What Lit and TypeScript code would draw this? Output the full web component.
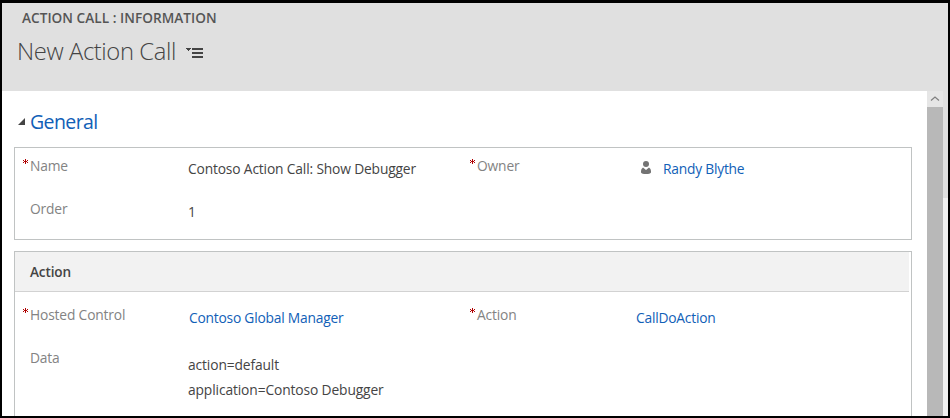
import { LitElement, html, css } from "lit";
import { customElement, property } from "lit/decorators.js";

@customElement("form-field")
class FormField extends LitElement {
  @property() label = "";
  @property({ type: Boolean }) required = false;

  static styles = css`
    :host { display: grid; grid-template-columns: 7px 158px 1fr; align-items: start; white-space: nowrap; }
    .mark { width: 5px; height: 5px; margin-top: 3px; color: #b00000; display: block; }
    .label { color: #838383; line-height: 20px; }
    .value { padding-top: 3px; line-height: 20px; }
  `;

  render() {
    return html`
      <span>${this.required
        ? html`<svg class="mark" viewBox="0 0 5 5" shape-rendering="crispEdges">
            <path fill="currentColor" d="M2 0h1v5h-1zM0 1h1v1h-1zM4 1h1v1h-1zM1 2h3v1h-3zM0 3h1v1h-1zM4 3h1v1h-1z" />
          </svg>`
        : ""}</span>
      <span class="label">${this.label}</span>
      <div class="value"><slot></slot></div>
    `;
  }
}

@customElement("app-root")
class AppRoot extends LitElement {
  static styles = css`
    :host {
      display: flex; flex-direction: column; box-sizing: border-box;
      width: 950px; height: 418px; overflow: hidden;
      border: solid #000; border-width: 3px 2px 2px 2px;
      background: #fff; color: #444;
      font: 13.8px "Open Sans", "Noto Sans", sans-serif; letter-spacing: -0.16px;
      white-space: nowrap;
    }
    .head { flex: none; height: 88px; background: #e0e0e0; box-sizing: border-box; padding: 5px 0 0 15px; }
    .crumb { margin: 0 0 0 5px; font-size: 13.6px; font-weight: 600; line-height: 20px; color: #555; letter-spacing: 0.04px; }
    .title { display: flex; align-items: center; height: 32px; margin-top: 7px; }
    .title h1 { margin: 0; width: 169px; font-size: 23.8px; font-weight: 300; line-height: 32px; color: #444; letter-spacing: -0.4px; }
    .menu { width: 18px; height: 12px; margin-top: 4px; }
    .body { flex: 1; min-height: 0; display: flex; }
    .form { flex: 1; min-width: 0; padding: 17px 15px 0 12px; overflow: hidden; }
    .section { display: flex; align-items: center; height: 28px; margin: 0 0 11px 4px; gap: 5px; }
    .section svg { margin-top: -2px; }
    .section h2 { margin: 0; font-size: 19.5px; font-weight: 400; line-height: 28px; color: #1160b7; letter-spacing: -0.6px; }
    .panel { border: 1px solid #c0c3c3; box-sizing: border-box; }
    .general { height: 93px; padding: 8px 0 0 8px; }
    .action { height: 200px; margin-top: 11px; }
    .bar { height: 39px; margin-right: 2px; padding-left: 15px; background: #f2f2f2; border-bottom: 1px solid #d2d2d2; line-height: 40px; font-weight: 600; font-size: 13.6px; color: #444; }
    .rows { padding: 13px 0 0 8px; }
    .grid { display: grid; grid-template-columns: 447px 1fr; grid-auto-rows: 43px; }
    .link { color: #1160b7; letter-spacing: -0.22px; }
    .inset { padding-left: 1px; }
    .person { display: flex; align-items: center; gap: 11px; padding-left: 5px; }
    .person svg { width: 12px; height: 13px; margin-top: -4px; }
    .lines { line-height: 25px; padding-top: 1px; letter-spacing: -0.12px; }
    .scroll { width: 16px; background: #b8b8b8; }
    .up { height: 16px; background: #e6e6e6; display: block; }
    .outer { width: 5px; background: #f1f1f1; }
    .outer div { height: 107px; background: #e0e0e0; }
  `;

  render() {
    return html`
      <header class="head">
        <p class="crumb">ACTION CALL : INFORMATION</p>
        <div class="title">
          <h1>New Action Call</h1>
          <svg class="menu" viewBox="0 0 18 12" shape-rendering="crispEdges" fill="#444">
            <path d="M0 1h5v1h-1v1h-1v1h-1v-1h-1v-1h-1zM6 1h11v2h-11zM6 5h11v2h-11zM6 9h11v2h-11z" />
          </svg>
        </div>
      </header>
      <div class="body">
        <main class="form">
          <div class="section">
            <svg width="7" height="7" viewBox="0 0 7 7"><path fill="#444" d="M7 0V7H0z" /></svg>
            <h2>General</h2>
          </div>
          <section class="panel general">
            <div class="grid">
              <form-field label="Name" required>Contoso Action Call: Show Debugger</form-field>
              <form-field label="Owner" required>
                <div class="person">
                  <svg viewBox="0 0 12 13" fill="#737373">
                    <circle cx="6" cy="3" r="3" />
                    <path d="M3 6.5L6 9L9 6.5Q11 7.5 11 10V11.5Q10 13 6 13T1 11.5V10Q1 7.5 3 6.5z" />
                  </svg>
                  <span class="link">Randy Blythe</span>
                </div>
              </form-field>
              <form-field label="Order">1</form-field>
            </div>
          </section>
          <section class="panel action">
            <div class="bar">Action</div>
            <div class="rows grid">
              <form-field label="Hosted Control" required><span class="link inset">Contoso Global Manager</span></form-field>
              <form-field label="Action" required><span class="link inset">CallDoAction</span></form-field>
              <form-field label="Data"><div class="lines">action=default<br />application=Contoso Debugger</div></form-field>
            </div>
          </section>
        </main>
        <div class="scroll">
          <svg class="up" width="16" height="16" viewBox="0 0 16 16">
            <path d="M4 9.5L8 6L12 9.5" fill="none" stroke="#808080" stroke-width="1.2" />
          </svg>
        </div>
        <div class="outer"><div></div></div>
      </div>
    `;
  }
}
